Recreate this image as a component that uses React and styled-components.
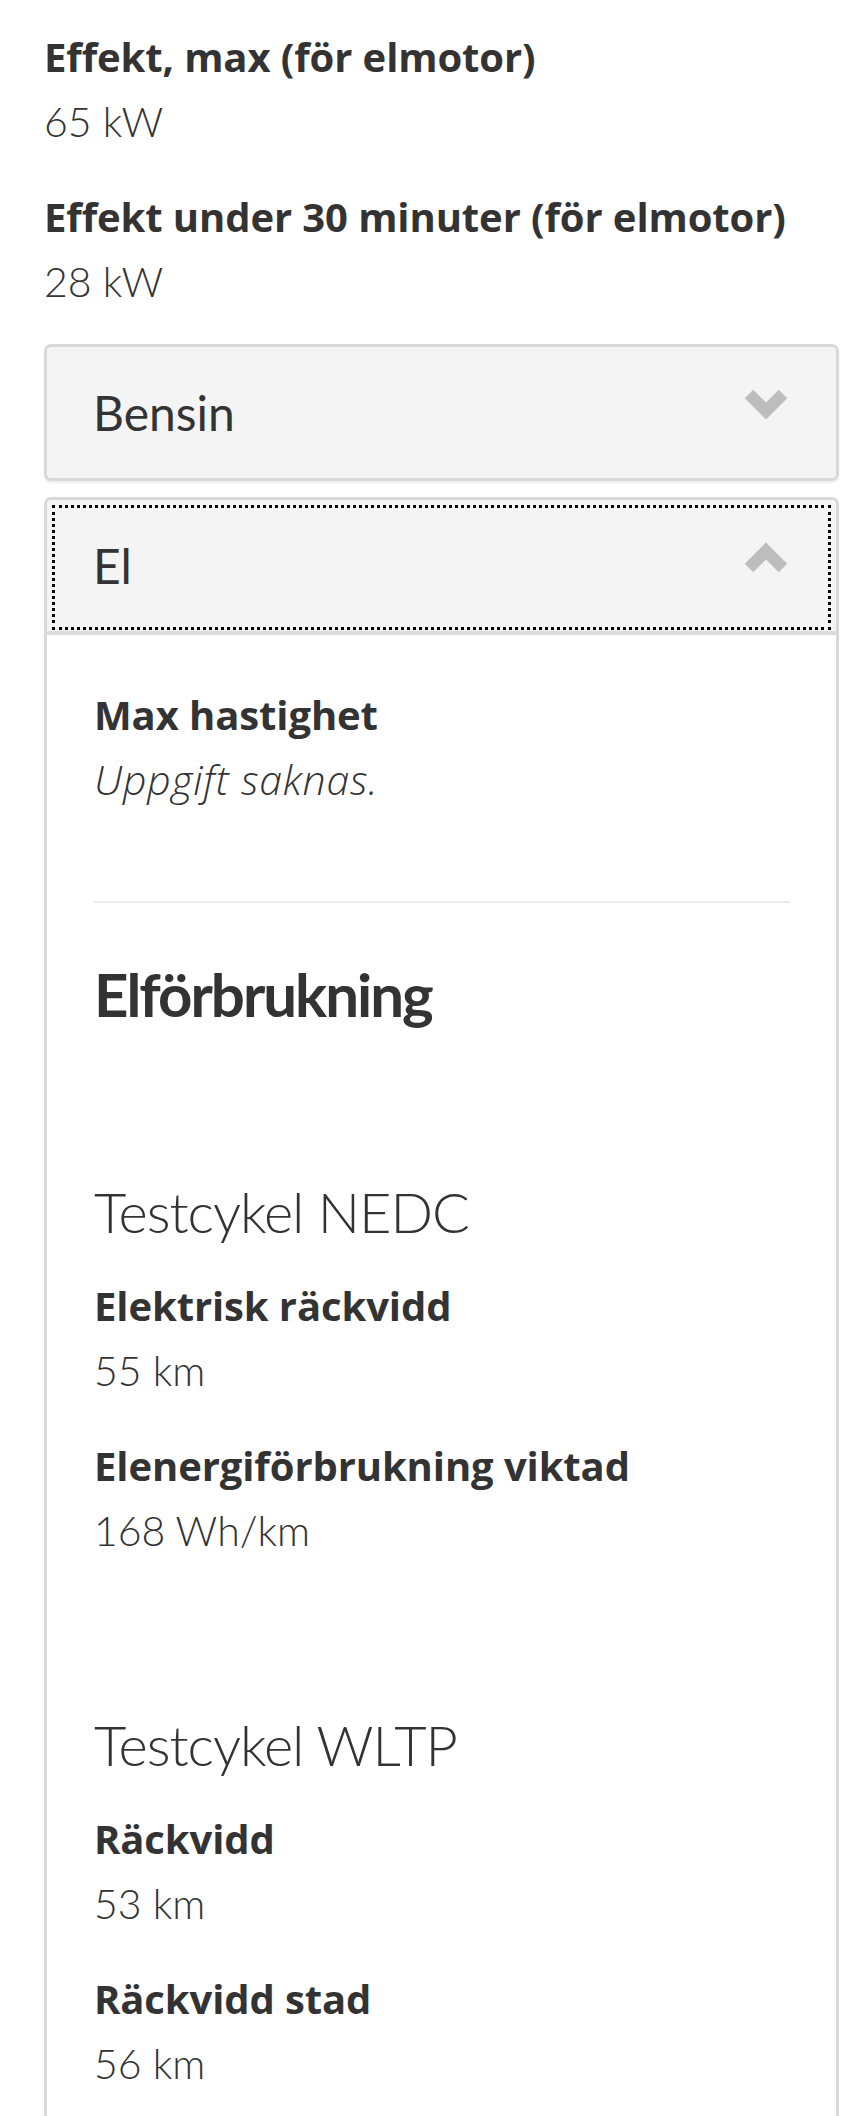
import React from "react";
import styled, { createGlobalStyle } from "styled-components";

const GlobalStyle = createGlobalStyle`
  html, body {
    margin: 0;
    padding: 0;
    background: #fff;
  }

  body {
    font-family: Lato, "Noto Sans", "Liberation Sans", sans-serif;
    color: #333;
  }
`;

const Page = styled.div`
  padding: 24px 26px 0 44px;
`;

const Spec = styled.div`
  margin-bottom: 30px;
`;

const Label = styled.div`
  font-family: "Open Sans", Lato, sans-serif;
  font-size: 40px;
  line-height: 65px;
  font-weight: 700;
  letter-spacing: -0.1px;
`;

const Value = styled.div`
  font-family: ${(p) => (p.$missing ? '"Open Sans", Lato, sans-serif' : "Lato, sans-serif")};
  font-size: 41px;
  line-height: 65px;
  font-weight: 300;
  font-style: ${(p) => (p.$missing ? "italic" : "normal")};
  letter-spacing: ${(p) => (p.$missing ? "0.8px" : "0")};
`;

const Accordion = styled.div`
  border: 3px solid #d9d9d9;
  border-radius: ${(p) => (p.$open ? "7px 7px 0 0" : "7px")};
  border-bottom-width: ${(p) => (p.$open ? "0" : "3px")};
  box-shadow: ${(p) => (p.$open ? "none" : "0 2px 2px rgba(0, 0, 0, 0.08)")};
  background: #f4f4f4;
  margin-bottom: 16px;
`;

const Header = styled.div`
  display: flex;
  align-items: center;
  justify-content: space-between;
  height: 131px;
  padding: 0 48px 0 46px;
  font-size: 48px;
  font-weight: 400;
  border-radius: 5px 5px 0 0;
  border-bottom: ${(p) => (p.$open ? "4px solid #dcdcdc" : "none")};
  outline: ${(p) => (p.$focused ? "3px dotted #000" : "none")};
  outline-offset: -8px;
`;

const Chevron = styled.svg`
  width: 44px;
  height: 31px;
  margin-top: -16px;
  flex-shrink: 0;
`;

const Panel = styled.div`
  background: #fff;
  padding: 47px 46px 0 47px;
  min-height: 1500px;
`;

const Divider = styled.hr`
  border: 0;
  height: 2px;
  background: #ececec;
  margin: 89px 0 0;
`;

const Heading = styled.h2`
  margin: 55px 0 0;
  font-size: 60px;
  line-height: 72px;
  font-weight: 700;
  letter-spacing: -2px;
`;

const SubHeading = styled.h3`
  margin: 148px 0 28px;
  font-size: 56px;
  line-height: 67px;
  font-weight: 300;
  letter-spacing: -1px;
`;

const ChevronIcon = ({ up }) => (
  <Chevron viewBox="0 0 44 31" aria-hidden="true">
    <polyline
      points={up ? "5,26 22,9 39,26" : "5,5 22,22 39,5"}
      fill="none"
      stroke="#bdbdbd"
      strokeWidth="12"
      strokeLinejoin="miter"
    />
  </Chevron>
);

const SpecItem = ({ label, value, missing }) => (
  <Spec>
    <Label>{label}</Label>
    <Value $missing={missing}>{value}</Value>
  </Spec>
);

export default function App() {
  return (
    <>
      <GlobalStyle />
      <Page>
        <SpecItem label="Effekt, max (för elmotor)" value="65 kW" />
        <SpecItem label="Effekt under 30 minuter (för elmotor)" value="28 kW" />

        <Accordion>
          <Header>
            <span>Bensin</span>
            <ChevronIcon />
          </Header>
        </Accordion>

        <Accordion $open>
          <Header $open $focused>
            <span>El</span>
            <ChevronIcon up />
          </Header>
          <Panel>
            <SpecItem label="Max hastighet" value="Uppgift saknas." missing />
            <Divider />
            <Heading>Elförbrukning</Heading>

            <SubHeading>Testcykel NEDC</SubHeading>
            <SpecItem label="Elektrisk räckvidd" value="55 km" />
            <SpecItem label="Elenergiförbrukning viktad" value="168 Wh/km" />

            <SubHeading>Testcykel WLTP</SubHeading>
            <SpecItem label="Räckvidd" value="53 km" />
            <SpecItem label="Räckvidd stad" value="56 km" />
          </Panel>
        </Accordion>
      </Page>
    </>
  );
}
